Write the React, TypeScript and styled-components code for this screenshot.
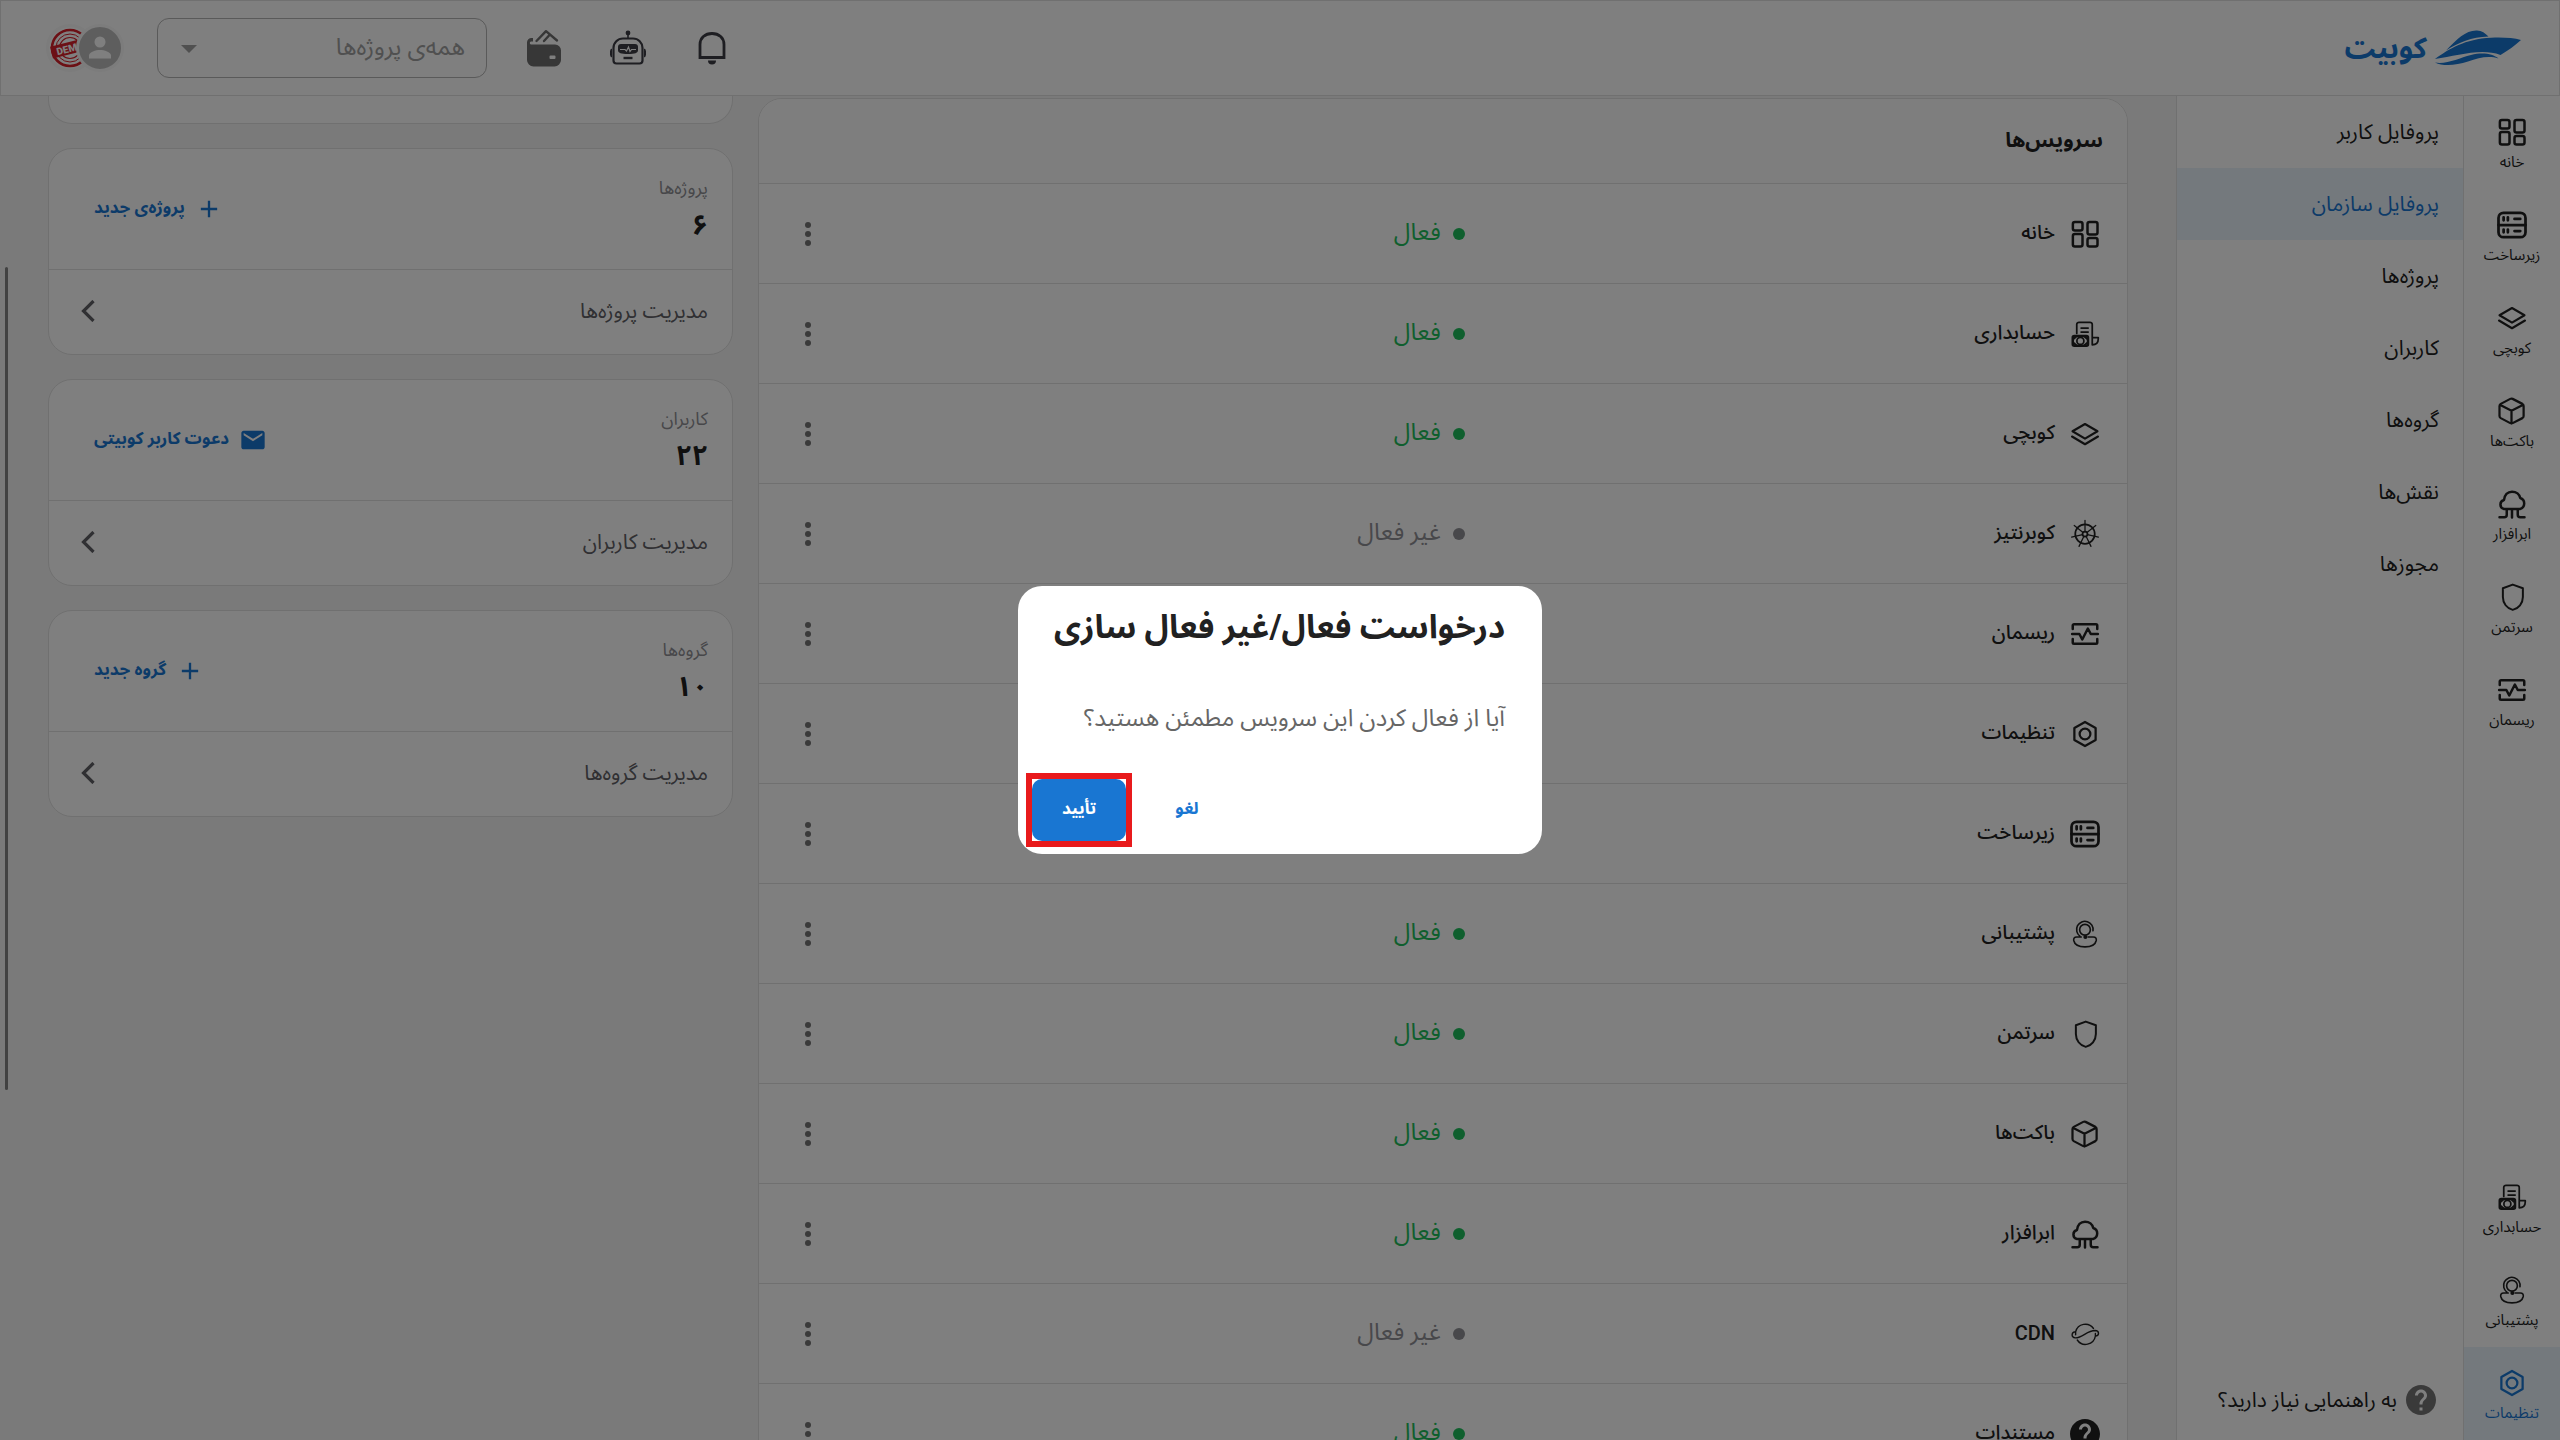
import React from "react";
import styled, { createGlobalStyle, css } from "styled-components";

const FONT = `Roboto, "Noto Sans Arabic", "DejaVu Sans", sans-serif`;

const color = {
  primary: "#1976d2",
  text: "#212121",
  muted: "#616166",
  faint: "#8f8f94",
  line: "#e0e0e0",
  page: "#f5f5f5",
  active: "#e8f3fb",
  success: "#1fbf5c",
};

const GlobalStyle = createGlobalStyle`
  *, *::before, *::after { box-sizing: border-box; }
  html, body { margin: 0; height: 100%; overflow: hidden; }
  body { font-family: ${FONT}; color: ${color.text}; background: ${color.page}; }
  button, select { font-family: inherit; }
  h1, h2, p { margin: 0; }
  svg { display: block; flex: none; }
`;

/* ---------- icons ---------- */

type IconName =
  | "home" | "server" | "layers" | "bucket" | "cloud" | "shield" | "pulse"
  | "billing" | "support" | "settings" | "wheel" | "cdn" | "help";

const helpPath =
  "M12 2C6.48 2 2 6.48 2 12s4.48 10 10 10 10-4.48 10-10S17.52 2 12 2zm1 17h-2v-2h2v2zm2.07-7.75l-.9.92C13.45 12.9 13 13.5 13 15h-2v-.5c0-1.1.45-2.1 1.17-2.83l1.24-1.26c.37-.36.59-.86.59-1.41 0-1.1-.9-2-2-2s-2 .9-2 2H8c0-2.21 1.79-4 4-4s4 1.79 4 4c0 .88-.36 1.68-.93 2.25z";

const spokes = Array.from({ length: 7 }, (_, i) => {
  const a = (i * 2 * Math.PI) / 7 - Math.PI / 2;
  return `M${12 + 2 * Math.cos(a)} ${12 + 2 * Math.sin(a)}L${12 + 11 * Math.cos(a)} ${12 + 11 * Math.sin(a)}`;
}).join("");

const glyphs: Record<Exclude<IconName, "help">, { w: number; body: React.ReactNode }> = {
  home: {
    w: 2,
    body: (
      <>
        <rect x="2.3" y="2.3" width="7.7" height="6.8" rx="1.6" />
        <rect x="2.3" y="12" width="7.7" height="10" rx="1.6" />
        <rect x="14" y="2.3" width="8" height="10" rx="1.6" />
        <rect x="14" y="15.2" width="8" height="6.8" rx="1.6" />
      </>
    ),
  },
  server: {
    w: 2.2,
    body: (
      <>
        <rect x="1.2" y="2.3" width="21.6" height="19.4" rx="4" />
        <path d="M1.2 12h21.6M5.3 5.8v2.4M8.7 5.8v2.4M14 7.1h4.6M5.3 15.6v2.2M8.7 15.6v2.2M14 16.8h4.6" />
      </>
    ),
  },
  layers: { w: 1.7, body: <path d="M12 4 22 9.8 12 15.7 2 9.8ZM1.6 14 12 20.2 22.4 14" /> },
  bucket: {
    w: 1.8,
    body: (
      <path d="M21.3 8a2 2 0 0 0-1-1.7l-7.8-4a2 2 0 0 0-1.9 0l-7.6 4A2 2 0 0 0 2 8v8a2 2 0 0 0 1 1.7l7.6 4a2 2 0 0 0 1.9 0l7.8-4a2 2 0 0 0 1-1.7ZM2.3 7l9.3 4.8L21 7M11.6 22V11.8" />
    ),
  },
  cloud: {
    w: 2,
    body: (
      <path d="M5.600 16A3.700 3.700 0 0 1 5.600 8.800C6 4.800 8.500 2.100 12 2.100S18 4.300 18.600 7.200A4.600 4.600 0 0 1 18.400 16ZM2 22.500H5.800a2 2 0 0 0 2-2V16M12 16v6.800M16.600 16v4.500a2 2 0 0 0 2 2H22" />
    ),
  },
  shield: {
    w: 1.6,
    body: <path d="M12.600 2.100 20.700 5v7c0 5-3.400 9.200-8.100 10.300C7.900 21.200 4.700 17 4.700 12V5Z" />,
  },
  pulse: {
    w: 2,
    body: <path d="M2.200 8V5.200a1 1 0 0 1 1-1H20.800a1 1 0 0 1 1 1V8M2.200 16v2.800a1 1 0 0 0 1 1H20.800a1 1 0 0 0 1-1V16M1.700 12H7.500L9.800 16.400 14.300 7.600 16.600 12H22.300" />,
  },
  billing: {
    w: 1.4,
    body: (
      <>
        <path d="M5.400 11.500V4.400a1.800 1.800 0 0 1 1.800-1.800H16a1.800 1.800 0 0 1 1.800 1.800V20.600M17.800 14.800H22.600V16c0 3-2 4.600-4.800 4.600M8.900 7.200H14.500M8.900 10.400H14.500" />
        <rect x="2.200" y="13.600" width="12.200" height="7.800" rx="1.200" strokeWidth="2" />
        <circle cx="8.300" cy="17.500" r="2.800" />
        <path d="M3 15.800 4.800 14.200M13.600 15.800 11.800 14.200M3 19.200 4.800 20.800M13.600 19.200 11.800 20.800" strokeWidth="1.600" />
      </>
    ),
  },
  support: {
    w: 1.3,
    body: (
      <>
        <circle cx="12" cy="8.600" r="4.300" />
        <path d="M18.400 9.400A6.600 6.600 0 1 0 7.900 13.700M9 14.400H5.400c-2 0-2.700 1.100-2.400 2.800.7 3.300 4.500 5.100 9 5.100s8.300-1.800 9-5.100c.3-1.700-.4-2.800-2.400-2.800H14.500" />
        <circle cx="12.300" cy="14.400" r="1" fill="currentColor" />
      </>
    ),
  },
  settings: {
    w: 1.8,
    body: (
      <>
        <path d="M12 2.400 20.500 7.200V16.800L12 21.600 3.500 16.800V7.200Z" />
        <circle cx="12" cy="12" r="4.300" />
      </>
    ),
  },
  wheel: {
    w: 1.4,
    body: (
      <>
        <circle cx="12" cy="12" r="7.800" />
        <circle cx="12" cy="12" r="2" />
        <path d={spokes} strokeWidth="1" />
      </>
    ),
  },
  cdn: {
    w: 1.1,
    body: (
      <path d="M4.500 12.600V10.200A8 8 0 0 1 18.800 7.600M5.800 16.800A8 8 0 0 0 20.300 13.700V11.600M4.500 10.200C1 10.200.600 14.900 4.200 15.100 10 15.300 13.500 9.200 20 9.200 23.800 9.400 23.600 13.300 20.300 13.700" />
    ),
  },
};

function Icon({ name, size = 30 }: { name: IconName; size?: number }) {
  if (name === "help") {
    return (
      <svg width={size} height={size} viewBox="2 2 20 20" fill="currentColor" aria-hidden="true">
        <path d={helpPath} />
      </svg>
    );
  }
  const g = glyphs[name];
  return (
    <svg width={size} height={size} viewBox="0 0 24 24" fill="none" stroke="currentColor" strokeWidth={g.w} strokeLinecap="round" strokeLinejoin="round" aria-hidden="true">
      {g.body}
    </svg>
  );
}

const Bell = () => (
  <svg width="30" height="36" viewBox="0 0 30 36" fill="none" stroke="currentColor" strokeWidth="2.800" aria-hidden="true">
    <path d="M3 27.500V14.500C3 8 8 3.500 15 3.500S27 8 27 14.500V27.500Z" />
    <path d="M11 30.500h8a4 4 0 0 1-8 0Z" fill="currentColor" stroke="none" />
  </svg>
);

const Bot = () => (
  <svg width="40" height="38" viewBox="0 0 40 38" fill="none" stroke="currentColor" strokeWidth="2.200" aria-hidden="true">
    <circle cx="20" cy="4" r="2.400" fill="currentColor" stroke="none" />
    <path d="M20 5v5" strokeWidth="1.600" />
    <path d="M5.500 19a9.500 9.500 0 0 1 9.500-9.500H25A9.500 9.500 0 0 1 34.500 19V31.500a3 3 0 0 1-3 3H8.500a3 3 0 0 1-3-3Z" />
    <path d="M4 19.500a3 3 0 0 0-2 3v3a3 3 0 0 0 2 3ZM36 19.500a3 3 0 0 1 2 3v3a3 3 0 0 1-2 3Z" fill="currentColor" stroke="none" />
    <path d="M13 15H27a3 3 0 0 1 3 3v3c0 3-3 4-10 4S10 24 10 21V18a3 3 0 0 1 3-3Z" fill="currentColor" stroke="none" />
    <path d="M12 20.500h5l1.500 1.500 2-4 1.500 4.500 1.500-2H28" stroke="#fff" strokeWidth="1.200" />
    <path d="M15.500 29h9" strokeWidth="2.400" />
  </svg>
);

const Wallet = () => (
  <svg width="38" height="38" viewBox="0 0 38 38" aria-hidden="true">
    <path fill="currentColor" fillRule="evenodd" d="M2 13.500V31a6.500 6.500 0 0 0 6.500 6.500H29.500A6.500 6.500 0 0 0 36 31V21.500a6 6 0 0 0-6-6H6c-1.500 0-1.500-3 0-3H8V9H6.500A4.500 4.500 0 0 0 2 13.500ZM25.500 26.500h4a1 1 0 0 1 1 1v1.500a1 1 0 0 1-1 1H25.500a1 1 0 0 1-1-1V27.500a1 1 0 0 1 1-1Z" />
    <path fill="none" stroke="currentColor" strokeWidth="2.400" strokeLinecap="round" strokeLinejoin="round" d="M11.500 12 21 2.200 32 11.500M19 12 24.500 6" />
  </svg>
);

const Ship = () => (
  <svg width="86" height="36" viewBox="0 0 86 36" fill="currentColor" aria-hidden="true">
    <path d="M11 20.500C22 9 31 0 42 .5 47 .8 50 3 53.500 6.500 36 7 24 12.500 11 20.500Z" />
    <path d="M0 29C14 19 30 9 56 7.800 68 7.200 78 8 86 10 80 15.500 73 20.500 65.500 25 46 17.500 22 26 0 29Z" />
    <path d="M0 32.500C12 34.500 24 28 36 25 48 22 58 24 63.500 28.500 54 25.500 44 27.500 33 31.500 21 35.500 8 36.500 0 32.500Z" />
  </svg>
);

const ArrowDown = () => (
  <svg width="16" height="8" viewBox="0 0 16 8" fill="currentColor" aria-hidden="true"><path d="M0 0h16L8 8Z" /></svg>
);
const Chevron = () => (
  <svg width="14" height="22" viewBox="0 0 14 22" fill="none" stroke="currentColor" strokeWidth="3.200" aria-hidden="true"><path d="M12.500 1 2.500 11l10 10" /></svg>
);
const Plus = () => (
  <svg width="28" height="28" viewBox="0 0 24 24" fill="currentColor" aria-hidden="true"><path d="M19 13h-6v6h-2v-6H5v-2h6V5h2v6h6v2z" /></svg>
);
const Mail = () => (
  <svg width="28" height="28" viewBox="0 0 24 24" fill="currentColor" aria-hidden="true"><path d="M20 4H4c-1.100 0-1.990.9-1.990 2L2 18c0 1.100.9 2 2 2h16c1.100 0 2-.9 2-2V6c0-1.100-.9-2-2-2zm0 4l-8 5-8-5V6l8 5 8-5v2z" /></svg>
);
const MoreDots = () => (
  <svg width="6" height="24" viewBox="0 0 6 24" fill="currentColor" aria-hidden="true">
    <circle cx="3" cy="3" r="3" /><circle cx="3" cy="12" r="3" /><circle cx="3" cy="21" r="3" />
  </svg>
);
const Person = () => (
  <svg width="42" height="42" viewBox="0 0 42 42" fill="#fff" aria-hidden="true">
    <circle cx="21" cy="15" r="5.500" /><path d="M10 31.500v-3c0-3.500 7-5.500 11-5.500s11 2 11 5.500v3Z" />
  </svg>
);
const Stamp = () => (
  <svg width="42" height="42" viewBox="0 0 42 42" fill="none" stroke="#d8202b" aria-hidden="true">
    <circle cx="21" cy="21" r="18" strokeWidth="2.600" />
    <circle cx="21" cy="21" r="14" strokeWidth="1" />
    <circle cx="21" cy="21" r="10.500" strokeWidth="1.200" />
    <g transform="rotate(-14 21 21)">
      <rect x="2" y="15" width="38" height="12" fill="#d8202b" stroke="none" />
      <text x="21" y="25" direction="ltr" textAnchor="middle" fontFamily="Roboto, sans-serif" fontSize="10" fontWeight="900" fill="#fff" stroke="none">DEMO</text>
    </g>
  </svg>
);

/* ---------- layout ---------- */

const Page = styled.div`
  display: flex;
  flex-direction: column;
  height: 100vh;
  overflow: hidden;
`;

const TopBar = styled.header`
  flex: none;
  display: flex;
  align-items: center;
  gap: 33px;
  height: 96px;
  padding: 0 38px 0 45px;
  background: #fff;
  border: 1px solid ${color.line};
`;

const Brand = styled.a`
  display: flex;
  align-items: center;
  gap: 8px;
  margin-inline-end: auto;
  color: ${color.primary};
  font-size: 29px;
  line-height: 56px;
  font-weight: 700;
  text-decoration: none;
`;

const IconGroup = styled.div`
  display: flex;
  gap: 36px;
`;

const IconButton = styled.button<{ $tone?: string }>`
  display: grid;
  place-items: center;
  width: 48px;
  height: 48px;
  padding: 0;
  border: 0;
  background: none;
  color: ${(p) => p.$tone || "#3c3c44"};
  cursor: pointer;
`;

const SelectBox = styled.div`
  position: relative;
  width: 330px;
  color: #a0a0a0;
  svg { position: absolute; left: 24px; top: 27px; pointer-events: none; }
`;

const ProjectSelect = styled.select`
  appearance: none;
  display: block;
  width: 100%;
  height: 60px;
  padding: 0 21px 2px;
  border: 1px solid #b4b4b4;
  border-radius: 12px;
  background: transparent;
  color: #a0a0a0;
  font-size: 24px;
`;

const Avatars = styled.div`
  display: flex;
  isolation: isolate;
`;

const Avatar = styled.span<{ $bg: string }>`
  position: relative;
  display: block;
  width: 48px;
  height: 48px;
  border: 3px solid #f8f8f8;
  border-radius: 50%;
  background: ${(p) => p.$bg};
  overflow: hidden;
  & + & { margin-inline-start: -18px; }
  &:first-child { z-index: 1; }
`;

const Body = styled.div`
  flex: 1;
  display: flex;
  min-height: 0;
`;

const Rail = styled.nav`
  flex: none;
  display: flex;
  flex-direction: column;
  width: 97px;
  background: #fff;
  border-left: 1px solid ${color.line};
`;

const activeStyle = css`
  background: ${color.active};
  color: ${color.primary};
`;

const RailLink = styled.a<{ $active?: boolean; $pushed?: boolean }>`
  display: flex;
  flex-direction: column;
  align-items: center;
  gap: 5px;
  height: 93px;
  padding-top: 21px;
  color: ${color.text};
  font-size: 15px;
  line-height: 20px;
  text-decoration: none;
  ${(p) => p.$pushed && "margin-top: auto;"}
  ${(p) => p.$active && activeStyle}
`;

const SubMenu = styled.nav`
  flex: none;
  display: flex;
  flex-direction: column;
  width: 287px;
  background: #fff;
  border-left: 1px solid ${color.line};
`;

const SubLink = styled.a<{ $active?: boolean }>`
  display: flex;
  align-items: center;
  height: 72px;
  padding: 0 24px;
  color: ${color.text};
  font-size: 21px;
  text-decoration: none;
  ${(p) => p.$active && activeStyle}
`;

const HelpLink = styled.a`
  display: flex;
  align-items: center;
  gap: 9px;
  height: 80px;
  margin-top: auto;
  padding: 0 27px;
  color: ${color.text};
  font-size: 21px;
  white-space: nowrap;
  text-decoration: none;
  svg { color: #757575; }
`;

const Main = styled.main`
  position: relative;
  flex: 1;
  display: grid;
  grid-template-columns: 2fr 1fr;
  align-items: start;
  gap: 25px;
  padding: 0 48px;
  min-width: 0;
  overflow: hidden;
  background: ${color.page};
`;

const ScrollThumb = styled.div`
  position: absolute;
  left: 5px;
  top: 171px;
  bottom: 350px;
  width: 3px;
  border-radius: 2px;
  background: #848484;
`;

const Panel = styled.section`
  margin-top: 2px;
  border: 1px solid ${color.line};
  border-radius: 24px;
  background: #fff;
  overflow: hidden;
`;

const PanelTitle = styled.h2`
  display: flex;
  align-items: center;
  height: 85px;
  padding: 0 24px 2px;
  border-bottom: 1px solid ${color.line};
  background: #fcfcfc;
  font-size: 21px;
  font-weight: 700;
`;

const ServiceTable = styled.table`
  width: 100%;
  table-layout: fixed;
  border-collapse: separate;
  border-spacing: 0;
`;

const Cell = styled.td<{ $w?: string }>`
  width: ${(p) => p.$w || "auto"};
  height: 100px;
  padding: 0 27px 0 25px;
  border-bottom: 1px solid ${color.line};
  text-align: start;
`;

const ServiceName = styled.span`
  display: flex;
  align-items: center;
  gap: 15px;
  font-size: 20px;
  font-weight: 500;
`;

const Label = styled.span`
  padding-bottom: 2px;
`;

const Status = styled.span<{ $on: boolean }>`
  display: flex;
  align-items: center;
  gap: 12px;
  padding-right: 6px;
  color: ${(p) => (p.$on ? color.success : "#909096")};
  font-size: 24px;
  &::before {
    content: "";
    width: 12px;
    height: 12px;
    border-radius: 50%;
    background: currentColor;
  }
`;

const RowEnd = styled.div`
  display: flex;
  justify-content: flex-end;
`;

const SideColumn = styled.aside`
  display: flex;
  flex-direction: column;
  gap: 24px;
`;

const Card = styled.section`
  border: 1px solid ${color.line};
  border-radius: 24px;
  background: #fff;
`;

const CardTail = styled.div`
  height: 28px;
  border: 1px solid ${color.line};
  border-top: 0;
  border-radius: 0 0 24px 24px;
  background: #fff;
`;

const CardTop = styled.div`
  display: flex;
  align-items: center;
  justify-content: space-between;
  height: 121px;
  padding: 0 24px 0 45px;
  border-bottom: 1px solid ${color.line};
`;

const Stat = styled.div`
  display: flex;
  flex-direction: column;
`;

const StatLabel = styled.span`
  color: ${color.faint};
  font-size: 18px;
  line-height: 32px;
`;

const StatValue = styled.strong`
  font-size: 28px;
  line-height: 42px;
  font-weight: 700;
`;

const TextButton = styled.button`
  display: flex;
  align-items: center;
  gap: 10px;
  padding: 0;
  border: 0;
  background: none;
  color: ${color.primary};
  font-size: 17px;
  font-weight: 700;
  cursor: pointer;
`;

const ManageLink = styled.a`
  display: flex;
  align-items: center;
  justify-content: space-between;
  height: 84px;
  padding: 0 24px 2px 32px;
  color: ${color.muted};
  font-size: 21px;
  text-decoration: none;
`;

const Backdrop = styled.div`
  position: fixed;
  inset: 0;
  display: flex;
  align-items: center;
  justify-content: center;
  background: rgba(0, 0, 0, 0.5);
`;

const Modal = styled.section`
  width: 524px;
  padding: 15px 37px 13px 14px;
  border-radius: 24px;
  background: #fff;
`;

const ModalTitle = styled.h1`
  font-size: 33px;
  line-height: 52px;
  font-weight: 700;
  white-space: nowrap;
`;

const ModalText = styled.p`
  margin: 47px 0 43px;
  color: #666;
  font-size: 24px;
  line-height: 36px;
  white-space: nowrap;
`;

const ModalActions = styled.div`
  display: flex;
  justify-content: flex-end;
  gap: 14px;
`;

const ModalButton = styled.button<{ $solid?: boolean }>`
  display: block;
  width: 94px;
  height: 62px;
  padding: 0 0 3px;
  border: 0;
  border-radius: 10px;
  background: ${(p) => (p.$solid ? color.primary : "none")};
  color: ${(p) => (p.$solid ? "#fff" : color.primary)};
  font-size: 17px;
  font-weight: 700;
  cursor: pointer;
`;

const Highlight = styled.span`
  display: block;
  box-shadow: 0 0 0 6px #e81a1c;
`;

/* ---------- data ---------- */

const railTop: [IconName, string][] = [
  ["home", "خانه"],
  ["server", "زیرساخت"],
  ["layers", "کوبچی"],
  ["bucket", "باکت‌ها"],
  ["cloud", "ابرافزار"],
  ["shield", "سرتمن"],
  ["pulse", "ریسمان"],
];
const railBottom: [IconName, string][] = [
  ["billing", "حسابداری"],
  ["support", "پشتیبانی"],
  ["settings", "تنظیمات"],
];
const menu = ["پروفایل کاربر", "پروفایل سازمان", "پروژه‌ها", "کاربران", "گروه‌ها", "نقش‌ها", "مجوزها"];
const services: [IconName, string, boolean][] = [
  ["home", "خانه", true],
  ["billing", "حسابداری", true],
  ["layers", "کوبچی", true],
  ["wheel", "کوبرنتیز", false],
  ["pulse", "ریسمان", true],
  ["settings", "تنظیمات", true],
  ["server", "زیرساخت", true],
  ["support", "پشتیبانی", true],
  ["shield", "سرتمن", true],
  ["bucket", "باکت‌ها", true],
  ["cloud", "ابرافزار", true],
  ["cdn", "CDN", false],
  ["help", "مستندات", true],
];
const cards = [
  { label: "پروژه‌ها", value: "۶", action: "پروژه‌ی جدید", icon: <Plus />, manage: "مدیریت پروژه‌ها" },
  { label: "کاربران", value: "۲۲", action: "دعوت کاربر کوبیتی", icon: <Mail />, manage: "مدیریت کاربران" },
  { label: "گروه‌ها", value: "۱۰", action: "گروه جدید", icon: <Plus />, manage: "مدیریت گروه‌ها" },
];

export default function App() {
  return (
    <>
      <GlobalStyle />
      <Page dir="rtl" lang="fa">
        <TopBar>
          <Brand href="#"><Ship />کوبیت</Brand>
          <IconGroup>
            <IconButton aria-label="اعلان‌ها"><Bell /></IconButton>
            <IconButton aria-label="دستیار"><Bot /></IconButton>
            <IconButton aria-label="کیف پول" $tone="#6e6e6e"><Wallet /></IconButton>
          </IconGroup>
          <SelectBox>
            <ProjectSelect aria-label="پروژه" defaultValue="all">
              <option value="all">همه‌ی پروژه‌ها</option>
            </ProjectSelect>
            <ArrowDown />
          </SelectBox>
          <Avatars>
            <Avatar $bg="#bdbdbd"><Person /></Avatar>
            <Avatar $bg="#fff"><Stamp /></Avatar>
          </Avatars>
        </TopBar>
        <Body>
          <Rail>
            {railTop.map(([icon, label]) => (
              <RailLink key={label} href="#"><Icon name={icon} />{label}</RailLink>
            ))}
            {railBottom.map(([icon, label], i) => (
              <RailLink key={label} href="#" $pushed={i === 0} $active={icon === "settings"}>
                <Icon name={icon} />{label}
              </RailLink>
            ))}
          </Rail>
          <SubMenu>
            {menu.map((label, i) => (
              <SubLink key={label} href="#" $active={i === 1}>{label}</SubLink>
            ))}
            <HelpLink href="#"><Icon name="help" />به راهنمایی نیاز دارید؟</HelpLink>
          </SubMenu>
          <Main>
            <Panel aria-labelledby="services-title">
              <PanelTitle id="services-title">سرویس‌ها</PanelTitle>
              <ServiceTable aria-labelledby="services-title">
                <tbody>
                  {services.map(([icon, name, on]) => (
                    <tr key={name}>
                      <Cell $w="46%"><ServiceName><Icon name={icon} /><Label>{name}</Label></ServiceName></Cell>
                      <Cell><Status $on={on}><Label>{on ? "فعال" : "غیر فعال"}</Label></Status></Cell>
                      <Cell $w="10%">
                        <RowEnd><IconButton aria-label="گزینه‌ها" $tone="#757575"><MoreDots /></IconButton></RowEnd>
                      </Cell>
                    </tr>
                  ))}
                </tbody>
              </ServiceTable>
            </Panel>
            <SideColumn>
              <CardTail />
              {cards.map((c) => (
                <Card key={c.label}>
                  <CardTop>
                    <Stat>
                      <StatLabel>{c.label}</StatLabel>
                      <StatValue>{c.value}</StatValue>
                    </Stat>
                    <TextButton>{c.icon}<Label>{c.action}</Label></TextButton>
                  </CardTop>
                  <ManageLink href="#">{c.manage}<Chevron /></ManageLink>
                </Card>
              ))}
            </SideColumn>
            <ScrollThumb />
          </Main>
        </Body>
        <Backdrop>
          <Modal role="dialog" aria-modal="true" aria-labelledby="modal-title">
            <ModalTitle id="modal-title">درخواست فعال/غیر فعال سازی</ModalTitle>
            <ModalText>آیا از فعال کردن این سرویس مطمئن هستید؟</ModalText>
            <ModalActions>
              <ModalButton>لغو</ModalButton>
              <Highlight><ModalButton $solid>تأیید</ModalButton></Highlight>
            </ModalActions>
          </Modal>
        </Backdrop>
      </Page>
    </>
  );
}
